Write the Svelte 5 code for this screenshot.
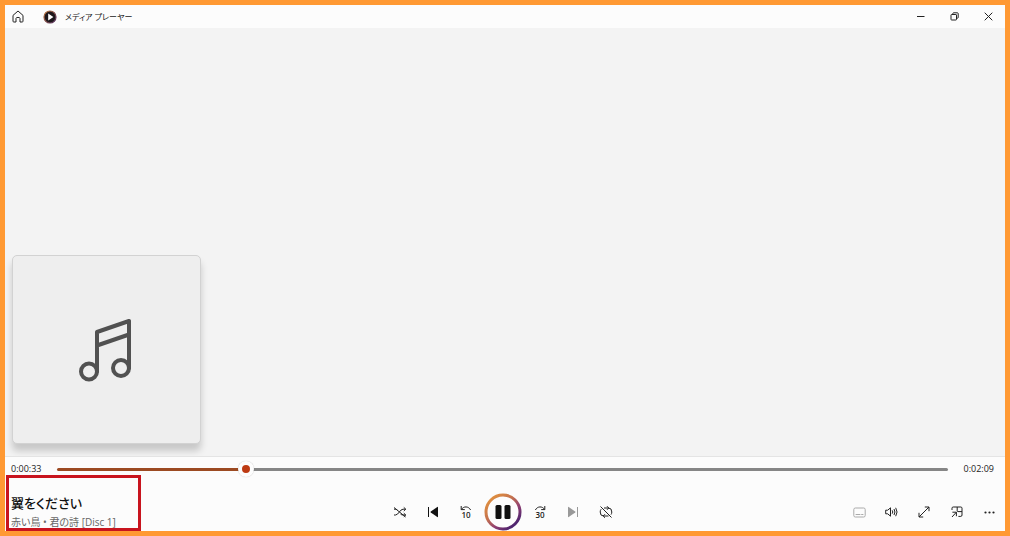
<script lang="ts">
  let progress = $state(207);
  let playing = $state(true);

  const elapsed = "0:00:33";
  const total = "0:02:09";
</script>

<div class="window">
  <header class="titlebar">
    <button type="button" class="home" aria-label="ホーム">
      <svg aria-hidden="true" width="12" height="13" viewBox="0 0 12 13" fill="none" stroke="#222" stroke-width="1" stroke-linejoin="round"><path d="M1 5.4L6 1L11 5.4V11.2Q11 12 10.2 12H8V8.4Q8 7.4 6 7.4Q4 7.4 4 8.4V12H1.8Q1 12 1 11.2Z"/></svg>
    </button>
    <svg class="logo" aria-hidden="true" width="14" height="14" viewBox="0 0 14 14">
      <defs>
        <linearGradient id="logo-ring" x1="0" y1="0" x2="1" y2="1">
          <stop offset="0" stop-color="#b8743a"/>
          <stop offset="1" stop-color="#4a2a5c"/>
        </linearGradient>
      </defs>
      <circle cx="7" cy="7" r="6" fill="#1d171b" stroke="url(#logo-ring)" stroke-width="1.2"/>
      <path d="M5.2 3.6L10.4 7L5.2 10.4Z" fill="#fff"/>
    </svg>
    <span class="app-name">メディア プレーヤー</span>
    <div class="window-buttons">
      <button type="button" aria-label="最小化">
        <svg aria-hidden="true" width="9" height="9" viewBox="0 0 9 9" stroke="#222" stroke-width="1"><path d="M1 4.5H8.5"/></svg>
      </button>
      <button type="button" aria-label="元に戻す">
        <svg aria-hidden="true" width="9" height="9" viewBox="0 0 9 9" fill="none" stroke="#222" stroke-width="1"><rect x="1" y="2.5" width="5.5" height="5.5" rx=".6"/><path d="M2.8 2.3V1.6Q2.8 .8 3.6 .8H7.4Q8.2 .8 8.2 1.6V5.4Q8.2 6.2 7.4 6.2H6.8"/></svg>
      </button>
      <button type="button" aria-label="閉じる">
        <svg aria-hidden="true" width="9" height="9" viewBox="0 0 9 9" stroke="#222" stroke-width="1"><path d="M.7 .7L8.3 8.3M8.3 .7L.7 8.3"/></svg>
      </button>
    </div>
  </header>

  <main class="stage">
    <div class="artwork">
      <svg aria-hidden="true" width="58" height="64" viewBox="0 0 58 64" fill="none" stroke="#515151" stroke-width="4" stroke-linecap="round" stroke-linejoin="round">
        <circle cx="11" cy="53.5" r="8"/>
        <circle cx="43" cy="50" r="8"/>
        <path d="M19 53.5V14L51 3V50M19 27.5L51 16.5"/>
      </svg>
    </div>
  </main>

  <footer class="player">
    <div class="timeline">
      <span class="time">{elapsed}</span>
      <input
        type="range"
        min="0"
        max="1000"
        bind:value={progress}
        aria-label="シーク"
        style:--played="{progress / 10}%"
      />
      <span class="time">{total}</span>
    </div>

    <div class="controls">
      <div class="track">
        <div class="track-title">翼をください</div>
        <div class="track-artist">赤い鳥 • 君の詩 [Disc 1]</div>
        <div class="highlight"></div>
      </div>

      <div class="transport">
        <button type="button" aria-label="シャッフル">
          <svg aria-hidden="true" width="14" height="12" viewBox="0 0 14 12" fill="none" stroke="#222" stroke-width="1"><path d="M1 9H2.5C5.5 9 7 3.2 10 3.2H12.5M1 1.5L12.6 11M7.6 8.2Q8.8 9 10 9H12.5M10.8 1.4L12.8 3.2L10.8 5M10.8 7.2L12.8 9L10.8 10.8M1 3.2H2.2Q3.4 3.2 4.4 4"/></svg>
        </button>
        <button type="button" aria-label="前へ">
          <svg aria-hidden="true" width="12" height="12" viewBox="0 0 12 12"><path d="M1.5 1V11" stroke="#111" stroke-width="1"/><path d="M11 1.4V10.6Q11 11.4 10.3 11L3.8 6.5Q3.2 6 3.8 5.5L10.3 1Q11 .6 11 1.4Z" fill="#111"/></svg>
        </button>
        <button type="button" aria-label="10 秒戻す">
          <svg aria-hidden="true" width="12" height="14" viewBox="0 0 12 14"><path d="M1.2 1V4.6H4.8M1.4 4.4C3.6 1 8.6 1 10.6 5" fill="none" stroke="#222"/><text x="6" y="13" text-anchor="middle">10</text></svg>
        </button>
        <button type="button" class="play" aria-label={playing ? "一時停止" : "再生"} onclick={() => (playing = !playing)}>
          <svg aria-hidden="true" width="38" height="38" viewBox="0 0 38 38">
            <defs>
              <linearGradient id="play-ring" x1="0.1" y1="0.1" x2="0.8" y2="0.9">
                <stop offset="0" stop-color="#e0903f"/>
                <stop offset="0.4" stop-color="#c4714f"/>
                <stop offset="0.7" stop-color="#8f3f72"/>
                <stop offset="1" stop-color="#4f256f"/>
              </linearGradient>
            </defs>
            <circle cx="19" cy="19" r="17" fill="#fdfdfd" stroke="url(#play-ring)" stroke-width="3"/>
            {#if playing}
              <rect x="11.5" y="12" width="6" height="14" rx="1.5" fill="#111"/>
              <rect x="20.5" y="12" width="6" height="14" rx="1.5" fill="#111"/>
            {:else}
              <path d="M14 11L27 19L14 27Z" fill="#111"/>
            {/if}
          </svg>
        </button>
        <button type="button" aria-label="30 秒進める">
          <svg aria-hidden="true" width="12" height="14" viewBox="0 0 12 14"><path d="M10.8 1V4.6H7.2M10.6 4.4C8.4 1 3.4 1 1.4 5" fill="none" stroke="#222"/><text x="6" y="13" text-anchor="middle">30</text></svg>
        </button>
        <button type="button" aria-label="次へ" disabled>
          <svg aria-hidden="true" width="12" height="12" viewBox="0 0 12 12"><path d="M10.5 1V11" stroke="#999" stroke-width="1"/><path d="M1 1.4V10.6Q1 11.4 1.7 11L8.2 6.5Q8.8 6 8.2 5.5L1.7 1Q1 .6 1 1.4Z" fill="#999"/></svg>
        </button>
        <button type="button" aria-label="リピート">
          <svg aria-hidden="true" width="14" height="12" viewBox="0 0 14 12" fill="none" stroke="#222" stroke-width="1"><path d="M5 2H9.5Q12.8 2 12.8 6Q12.8 7.6 12 8.6M8 .2L9.8 2L8 3.8M9.5 10H4.5Q1.2 10 1.2 6Q1.2 4.2 2.2 3.2M6 8.2L4.2 10L6 11.8M1.5 .5L12.5 11.5"/></svg>
        </button>
      </div>

      <div class="options">
        <button type="button" aria-label="字幕" disabled>
          <svg aria-hidden="true" width="13" height="11" viewBox="0 0 13 11" fill="none" stroke="#aaa" stroke-width="1"><rect x=".8" y="1" width="11.4" height="9" rx="1.5"/><path d="M2.6 7.5H7.4M8.2 7.5H10.4"/></svg>
        </button>
        <button type="button" aria-label="音量">
          <svg aria-hidden="true" width="13" height="12" viewBox="0 0 13 12" fill="none" stroke="#222" stroke-width="1" stroke-linejoin="round"><path d="M.7 4.2H2.7L5.5 1.8V10.2L2.7 7.8H.7ZM7.2 4.3Q8.4 6 7.2 7.7M9 3Q10.9 6 9 9M10.7 1.8Q13.4 6 10.7 10.2"/></svg>
        </button>
        <button type="button" aria-label="全画面表示">
          <svg aria-hidden="true" width="12" height="12" viewBox="0 0 12 12" fill="none" stroke="#222" stroke-width="1"><path d="M6.8 1H11V5.2M11 1L1 11M1 6.8V11H5.2"/></svg>
        </button>
        <button type="button" aria-label="ミニ プレーヤー">
          <svg aria-hidden="true" width="12" height="12" viewBox="0 0 12 12" fill="none" stroke="#222" stroke-width="1"><path d="M1 4V2.2Q1 1 2.2 1H9.8Q11 1 11 2.2V9Q11 10.4 9.8 10.4H7.4M6.2 1V4.8Q6.2 5.6 7 5.6H11M1.4 6.2H5.4V10.2M5.4 6.2L1 11"/></svg>
        </button>
        <button type="button" aria-label="その他のオプション">
          <svg aria-hidden="true" width="11" height="3" viewBox="0 0 11 3" fill="#222"><circle cx="1.5" cy="1.5" r="1.1"/><circle cx="5.5" cy="1.5" r="1.1"/><circle cx="9.5" cy="1.5" r="1.1"/></svg>
        </button>
      </div>
    </div>
  </footer>
</div>

<style>
  :global(body) {
    margin: 0;
  }

  .window {
    box-sizing: border-box;
    display: flex;
    flex-direction: column;
    min-height: 100vh;
    border: 5px solid #ff9933;
    background: #f3f3f3;
    color: #222;
    font-family: "Open Sans", "Noto Sans CJK JP", sans-serif;
    font-feature-settings: "palt";
  }

  button {
    display: flex;
    align-items: center;
    justify-content: center;
    padding: 0;
    border: none;
    background: none;
  }

  svg {
    display: block;
  }

  .titlebar {
    display: flex;
    align-items: center;
    height: 23px;
    background: #fcfcfc;
  }

  .home {
    width: 26px;
    height: 23px;
  }

  .logo {
    margin-left: 12px;
  }

  .app-name {
    margin-left: 8px;
    font-size: 8px;
    line-height: 12px;
  }

  .window-buttons {
    display: flex;
    margin-left: auto;
  }

  .window-buttons button {
    width: 34px;
    height: 23px;
  }

  .stage {
    display: flex;
    flex: 1;
    align-items: flex-end;
    padding: 12px 7px;
  }

  .artwork {
    box-sizing: border-box;
    display: flex;
    align-items: center;
    justify-content: center;
    width: 189px;
    height: 189px;
    border: 1px solid #d2d2d2;
    border-radius: 5px;
    background: #eeeeee;
    box-shadow: 0 7px 7px rgba(0, 0, 0, 0.18);
  }

  .player {
    position: relative;
    border-top: 1px solid #e4e4e4;
    background: #fcfcfc;
  }

  .timeline {
    display: flex;
    align-items: center;
    justify-content: space-between;
    height: 24px;
    padding: 0 11px 0 6px;
  }

  .time {
    font-size: 9px;
    line-height: 12px;
  }

  input {
    flex: 1;
    appearance: none;
    height: 18px;
    margin: 0 16px;
    background: none;
  }

  input::-webkit-slider-runnable-track {
    height: 3px;
    border-radius: 2px;
    background: linear-gradient(to right, #9c4a22 var(--played), #868686 var(--played));
  }

  input::-webkit-slider-thumb {
    appearance: none;
    box-sizing: border-box;
    width: 16px;
    height: 16px;
    margin-top: -7px;
    border: 4px solid #fdfdfd;
    border-radius: 50%;
    background: #bd3a12;
    box-shadow: 0 0 1px rgba(0, 0, 0, 0.25);
  }

  .controls {
    display: grid;
    grid-template-columns: 1fr auto 1fr;
    align-items: end;
    height: 50px;
  }

  .track {
    position: relative;
    align-self: stretch;
    box-sizing: border-box;
    padding: 12px 6px 0;
  }

  .track-title {
    color: #111;
    font-size: 13px;
    font-weight: 500;
    line-height: 20px;
  }

  .track-artist {
    color: #666;
    font-size: 10px;
    line-height: 18px;
  }

  /* marks the track info, drawn over the end of the timeline */
  .highlight {
    position: absolute;
    box-sizing: border-box;
    top: -6px;
    bottom: 0;
    left: 1px;
    width: 135px;
    border: 3px solid #c8141e;
    pointer-events: none;
  }

  .transport {
    display: flex;
    align-items: center;
    gap: 1px;
    margin-right: 4px;
  }

  .transport button,
  .options button {
    width: 32px;
    height: 38px;
  }

  .transport .play {
    width: 38px;
    margin: 0 1px;
  }

  .transport text {
    fill: #222;
    font-family: "Open Sans", sans-serif;
    font-size: 8px;
    font-weight: 600;
  }

  .options {
    display: flex;
    justify-content: space-between;
    justify-self: end;
    width: 162px;
  }
</style>
